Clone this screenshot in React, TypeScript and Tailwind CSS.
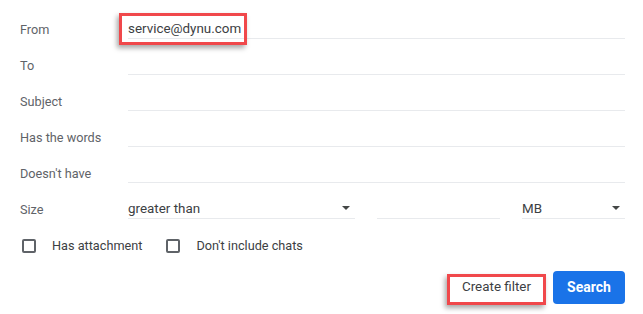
import React from 'react';

const FONT = { fontFamily: 'Roboto, "Liberation Sans", Arial, sans-serif' };

function Caret() {
  return (
    <svg width="8" height="4" viewBox="0 0 8 4" className="shrink-0">
      <path d="M0 0 L8 0 L4 4 Z" fill="#444746" />
    </svg>
  );
}

function Row({ label, children }: { label: string; children?: React.ReactNode }) {
  return (
    <div className="flex items-end h-9">
      <div className="w-[108px] shrink-0 text-[12.7px] leading-[16px] pb-[1px] text-[#5f6368]">{label}</div>
      {children ?? <div className="flex-1 h-[22px] border-b border-[#e8eaed]" />}
    </div>
  );
}

function Field({ children, className = '' }: { children?: React.ReactNode; className?: string }) {
  return (
    <div className={`h-[22px] border-b border-[#e8eaed] flex items-end justify-between pb-[1px] ${className}`}>
      {children}
    </div>
  );
}

function Checkbox({ label }: { label: string }) {
  return (
    <label className="flex items-center">
      <span className="w-[14px] h-[14px] border-2 border-[#5f6368] rounded-[2px] mr-4" />
      <span className="text-[12.7px] text-[#3c4043]">{label}</span>
    </label>
  );
}

// red annotation frame drawn over a control
function Highlight({ className }: { className: string }) {
  return (
    <div
      className={`absolute border-[3px] border-[#f0484b] shadow-[-2px_3px_5px_rgba(0,0,0,0.35)] pointer-events-none ${className}`}
    />
  );
}

export default function App() {
  return (
    <div className="w-[643px] h-[314px] bg-white relative" style={FONT}>
      <div className="pl-5 pr-[18px] pt-[3px]">
        <Row label="From">
          <Field className="flex-1">
            <span className="text-[13.4px] leading-[16px] text-[#3c4043]">service@dynu.com</span>
          </Field>
        </Row>
        <Row label="To" />
        <Row label="Subject" />
        <Row label="Has the words" />
        <Row label="Doesn't have" />
        <Row label="Size">
          <div className="flex-1 flex">
            <Field className="w-[227px] pr-[5px]">
              <span className="text-[13.4px] leading-[16px] text-[#3c4043]">greater than</span>
              <span className="mb-[7px]"><Caret /></span>
            </Field>
            <Field className="w-[123px] ml-[22px]" />
            <Field className="flex-1 ml-[22px] pr-[5px]">
              <span className="text-[13.4px] leading-[16px] text-[#3c4043]">MB</span>
              <span className="mb-[7px]"><Caret /></span>
            </Field>
          </div>
        </Row>
        <div className="flex items-center h-[14px] mt-[20px] pl-[2px] gap-[24px]">
          <Checkbox label="Has attachment" />
          <Checkbox label="Don't include chats" />
        </div>
        <div className="flex justify-end items-center mt-[18px] gap-[7px]">
          <button className="w-[99px] h-[30px] text-[13.4px] text-[#3c4043]">Create filter</button>
          <button className="w-[72px] h-[33px] rounded-[4px] bg-[#1a73e8] text-white text-[14px] font-bold">
            Search
          </button>
        </div>
      </div>
      <Highlight className="left-[119px] top-[13px] w-[128px] h-[32px]" />
      <Highlight className="left-[447px] top-[274px] w-[99px] h-[31px]" />
    </div>
  );
}
